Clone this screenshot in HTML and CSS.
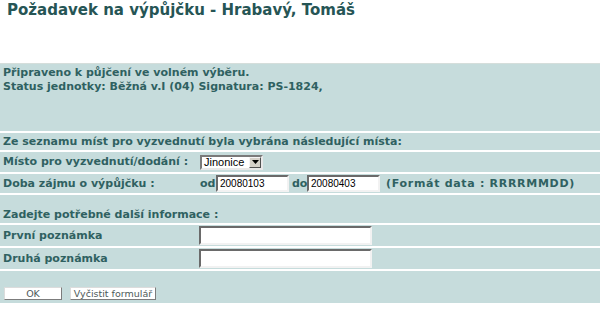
FILE: index.html
```html
<!DOCTYPE html>
<html lang="cs">
<head>
<meta charset="utf-8">
<title>Požadavek na výpůjčku</title>
<link rel="stylesheet" href="styles.css">
</head>
<body>
<h1 class="title">Požadavek na výpůjčku - Hrabavý, Tomáš</h1>
<form class="form">
  <div class="row info">Připraveno k půjčení ve volném výběru.<br>Status jednotky: Běžná v.I (04) Signatura: PS-1824,</div>
  <div class="row head">Ze seznamu míst pro vyzvednutí byla vybrána následující místa:</div>
  <div class="row place">
    <div class="label">Místo pro vyzvednutí/dodání :</div>
    <div class="ctrl">
      <div class="select"><span class="select-text">Jinonice</span><span class="select-btn"><svg width="7" height="4" viewBox="0 0 7 4"><path d="M0 0H7L3.5 4Z" fill="#000"/></svg></span></div>
    </div>
  </div>
  <div class="row dates">
    <div class="label">Doba zájmu o výpůjčku :</div>
    <div class="ctrl">
      <span class="word">od</span><input class="date" type="text" value="20080103"><span class="word">do</span><input class="date" type="text" value="20080403"><span class="hint">(Formát data : RRRRMMDD)</span>
    </div>
  </div>
  <div class="row extra">Zadejte potřebné další informace :</div>
  <div class="row note">
    <div class="label">První poznámka</div>
    <div class="ctrl"><input class="text" type="text"></div>
  </div>
  <div class="row note">
    <div class="label">Druhá poznámka</div>
    <div class="ctrl"><input class="text" type="text"></div>
  </div>
  <div class="row buttons">
    <button class="btn ok" type="button">OK</button>
    <button class="btn clear" type="button">Vyčistit formulář</button>
  </div>
</form>
</body>
</html>
```

FILE: styles.css
```css
* { box-sizing: border-box; }
html, body { margin: 0; padding: 0; background: #ffffff; }
body {
  font-family: "DejaVu Sans", Verdana, sans-serif;
  color: #2f6161;
}
.title {
  margin: 0;
  padding: 0 0 0 7px;
  height: 20px;
  font-size: 15px;
  line-height: 20px;
  font-weight: bold;
  color: #265555;
}
.form {
  margin: 43px 0 0 0;
  display: flex;
  flex-direction: column;
  gap: 2px;
  font-size: 11px;
  line-height: 14px;
  font-weight: bold;
  background: #ffffff;
}
.row {
  background: #c6dcdc;
  display: flex;
  align-items: center;
  padding: 0 3px;
}
.info {
  display: block;
  height: 68px;
  padding-top: 2px;
  border-top: 1px solid #d5dedb;
}
.head { height: 17px; }
.place { height: 20px; }
.dates { height: 19px; }
.extra { height: 28px; align-items: flex-end; padding-bottom: 1px; }
.note { height: 21px; }
.buttons { height: 32px; align-items: flex-end; padding: 0 0 3px 4px; gap: 8px; }
.label { width: 196px; flex: none; white-space: nowrap; }
.ctrl { display: flex; align-items: center; white-space: nowrap; }

.select {
  width: 63px;
  height: 15px;
  margin-left: 1px;
  display: flex;
  align-items: center;
  justify-content: space-between;
  background: #fff;
  border: 2px solid;
  border-color: #7a7a7a #e8e8e8 #e8e8e8 #7a7a7a;
  font-family: "Liberation Sans", Arial, sans-serif;
  font-weight: normal;
  font-size: 11px;
  color: #000;
}
.select-text { padding-left: 2px; line-height: 11px; }
.select-btn {
  width: 12px;
  height: 11px;
  background: #d4d0c8;
  border: 1px solid;
  border-color: #f4f4f4 #505050 #505050 #f4f4f4;
  display: flex;
  align-items: center;
  justify-content: center;
}
.select-btn svg { display: block; }

.word { width: 17px; padding-left: 1px; flex: none; }
.date, .text {
  height: 17px;
  margin: 0;
  padding: 0 0 0 2px;
  background: #fff;
  border: 2px solid;
  border-color: #6a6a6a #f2f2f2 #f2f2f2 #6a6a6a;
  font-family: "Liberation Sans", Arial, sans-serif;
  font-weight: normal;
  font-size: 10px;
  color: #000;
  outline: none;
}
.date { width: 73px; margin-right: 3px; }
.date + .word { width: 15px; padding-left: 0; }
.hint { padding-left: 3px; letter-spacing: 0.7px; }
.text { width: 173px; height: 19px; margin-left: 0; }

.btn {
  margin: 0;
  height: 13px;
  padding: 0;
  background: #ffffff;
  border: 1px solid;
  border-color: #dcdcdc #7c7c7c #7c7c7c #dcdcdc;
  font-family: "DejaVu Sans", Verdana, sans-serif;
  font-weight: normal;
  font-size: 9.5px;
  line-height: 11px;
  color: #4e5a5a;
}
.ok { width: 58px; }
.clear { width: 86px; }
```
